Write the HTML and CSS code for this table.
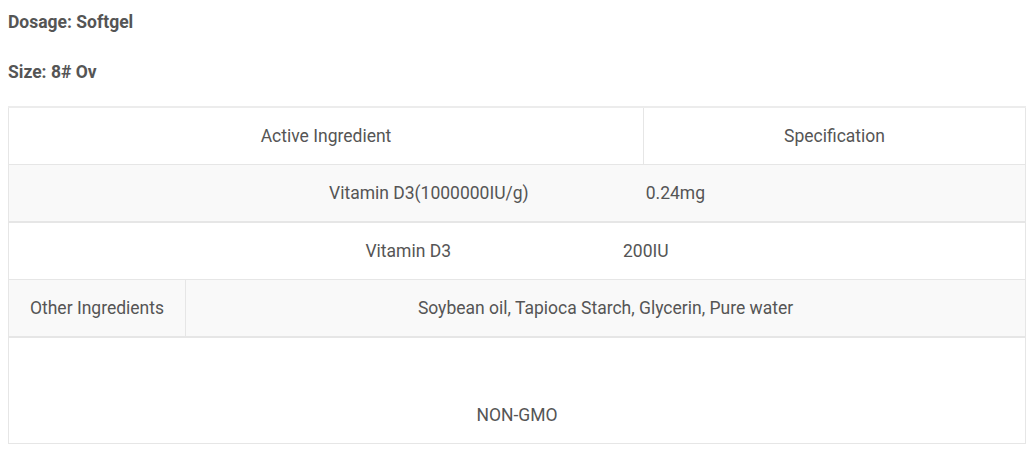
FILE: index.html
```html
<!DOCTYPE html>
<html>
<head>
<meta charset="utf-8">
<link rel="stylesheet" href="styles.css">
</head>
<body>
<div class="page">
  <p class="spec"><strong>Dosage: Softgel</strong></p>
  <p class="spec"><strong>Size: 8# Ov</strong></p>
  <table class="ingredients">
    <colgroup>
      <col class="col-a">
      <col class="col-b">
      <col class="col-c">
    </colgroup>
    <tr class="row-head">
      <td colspan="2">Active Ingredient</td>
      <td>Specification</td>
    </tr>
    <tr class="row-alt">
      <td colspan="3"><span>Vitamin D3(1000000IU/g)</span><span class="gap-1">0.24mg</span></td>
    </tr>
    <tr class="row-plain">
      <td colspan="3"><span>Vitamin D3</span><span class="gap-2">200IU</span></td>
    </tr>
    <tr class="row-alt">
      <td>Other Ingredients</td>
      <td colspan="2">Soybean oil, Tapioca Starch, Glycerin, Pure water</td>
    </tr>
    <tr class="row-tall">
      <td colspan="3">NON-GMO</td>
    </tr>
  </table>
</div>
</body>
</html>
```
FILE: styles.css
```css
html, body {
  margin: 0;
  padding: 0;
  background: #ffffff;
}

.page {
  padding: 10px 8px 0 8px;
  font-family: Roboto, "Liberation Sans", sans-serif;
  font-size: 17.5px;
  line-height: 24px;
  color: #555555;
}

.spec {
  margin: 0 0 26px 0;
}

.spec:last-of-type {
  margin-bottom: 22px;
}

.spec strong {
  font-weight: 700;
  color: #555555;
}

.ingredients {
  width: 1017px;
  border-collapse: collapse;
  table-layout: fixed;
  border-top: 2px solid #ececec;
  font-size: 17.5px;
}

.col-a { width: 177px; }
.col-b { width: 458px; }
.col-c { width: 382px; }

.ingredients td {
  border: 1px solid #e6e6e6;
  text-align: center;
  padding: 0 8px;
  color: #555555;
}

.row-head td { height: 56px; }

.row-alt td {
  background: #f9f9f9;
  height: 56px;
}

.row-plain td { height: 56px; }

.row-alt td {
  border-bottom-width: 2px;
}

.row-tall td {
  height: 106px;
  vertical-align: bottom;
  padding-bottom: 16px;
  box-sizing: border-box;
}

.gap-1 { padding-left: 117px; }
.gap-2 { padding-left: 172px; }
```
